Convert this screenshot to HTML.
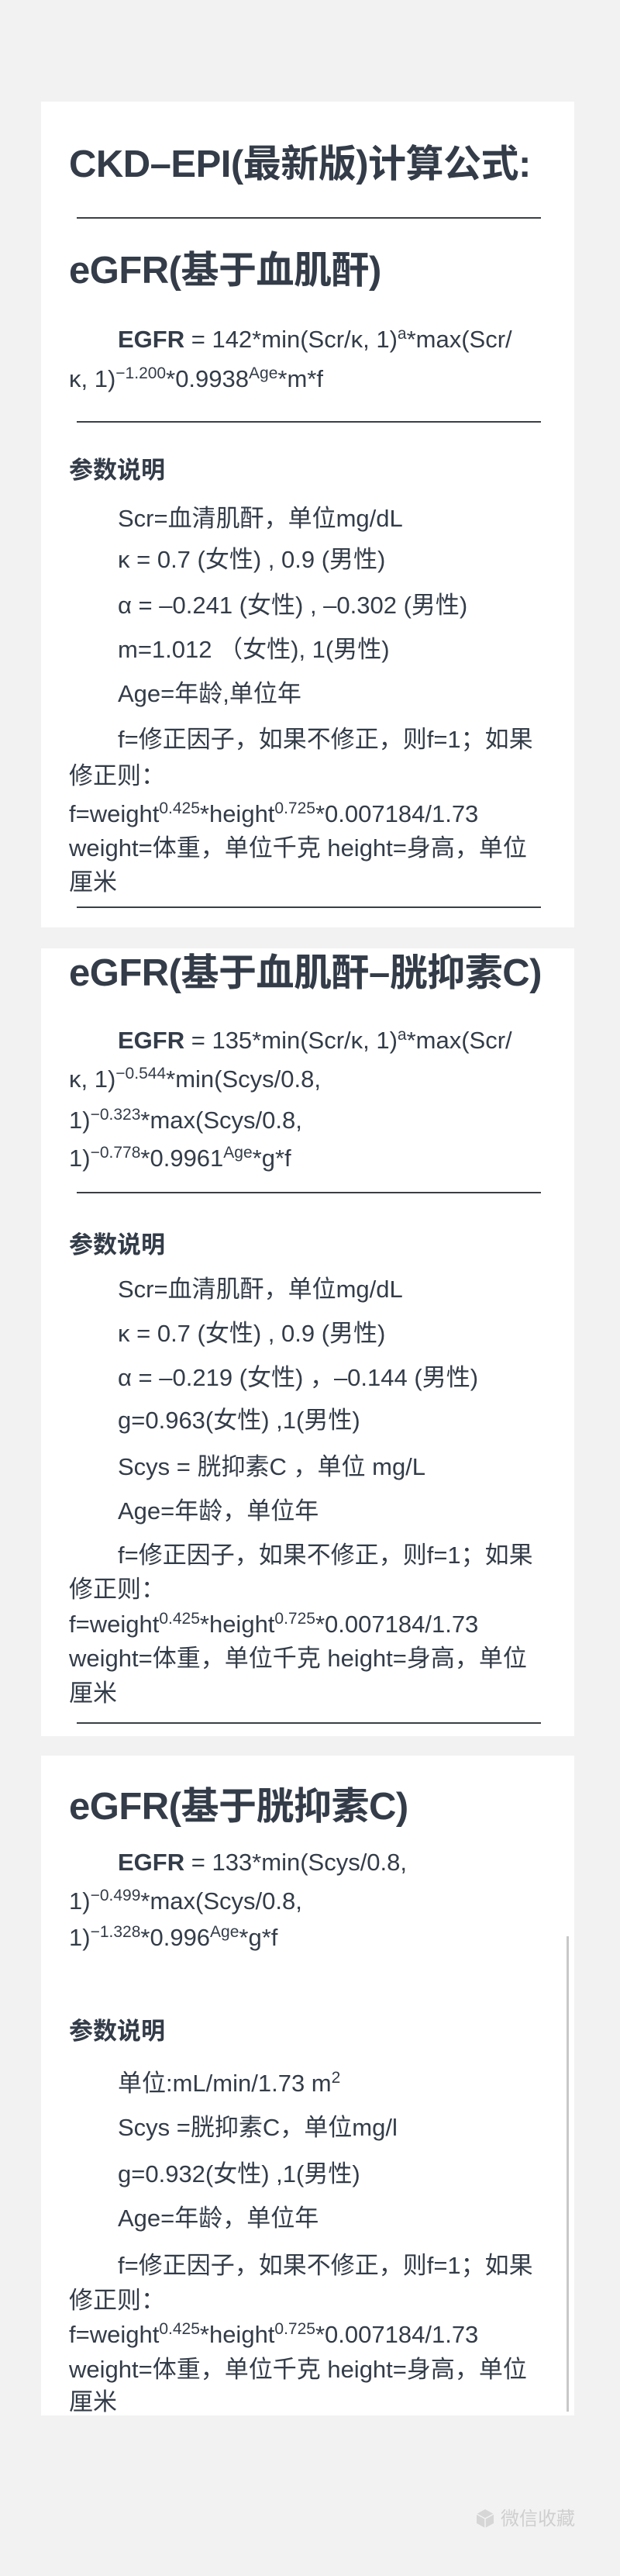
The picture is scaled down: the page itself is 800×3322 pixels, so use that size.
<!DOCTYPE html>
<html><head><meta charset="utf-8"><style>
body{margin:0;background:#f2f2f2;width:800px;height:3322px;position:relative;overflow:hidden;font-family:"Liberation Sans","Noto Sans CJK SC",sans-serif;color:#333c48}
.card{position:absolute;left:53px;width:688px;background:#fff}
.l{position:absolute;left:89px;white-space:nowrap;font-size:31px;line-height:46px;height:46px}
.i{left:152px}
.t{font-size:49px;line-height:64px;height:64px;font-weight:bold;letter-spacing:-0.5px}
.h{font-size:31px;font-weight:bold}
.hr{position:absolute;left:99px;width:599px;height:2px;background:#3a3f46}
sup{font-size:21px;vertical-align:11px;line-height:0}
b{font-weight:bold}
</style></head><body>
<div class="card" style="top:131px;height:1065px"></div>
<div class="card" style="top:1223px;height:1016px"></div>
<div class="card" style="top:2264px;height:851px"></div>
<div style="position:absolute;left:731px;top:2497px;width:3px;height:613px;background:#c8c8c8"></div>

<div class="l t" style="top:180px">CKD–EPI(最新版)计算公式:</div>
<div class="hr" style="top:280px"></div>
<div class="l t" style="top:317px">eGFR(基于血肌酐)</div>
<div class="l i" style="top:415px"><b>EGFR</b> = 142*min(Scr/κ, 1)<sup>a</sup>*max(Scr/</div>
<div class="l" style="top:466px">κ, 1)<sup>−1.200</sup>*0.9938<sup>Age</sup>*m*f</div>
<div class="hr" style="top:543px"></div>
<div class="l h" style="top:584px">参数说明</div>
<div class="l i" style="top:646px">Scr=血清肌酐，单位mg/dL</div>
<div class="l i" style="top:699px">κ = 0.7 (女性) , 0.9 (男性)</div>
<div class="l i" style="top:758px">α = –0.241 (女性) , –0.302 (男性)</div>
<div class="l i" style="top:815px">m=1.012 （女性), 1(男性)</div>
<div class="l i" style="top:872px">Age=年龄,单位年</div>
<div class="l i" style="top:931px">f=修正因子，如果不修正，则f=1；如果</div>
<div class="l" style="top:978px">修正则：</div>
<div class="l" style="top:1027px">f=weight<sup>0.425</sup>*height<sup>0.725</sup>*0.007184/1.73</div>
<div class="l" style="top:1071px">weight=体重，单位千克 height=身高，单位</div>
<div class="l" style="top:1115px">厘米</div>
<div class="hr" style="top:1169px"></div>

<div class="l t" style="top:1223px">eGFR(基于血肌酐–胱抑素C)</div>
<div class="l i" style="top:1319px"><b>EGFR</b> = 135*min(Scr/κ, 1)<sup>a</sup>*max(Scr/</div>
<div class="l" style="top:1369px">κ, 1)<sup>−0.544</sup>*min(Scys/0.8,</div>
<div class="l" style="top:1422px">1)<sup>−0.323</sup>*max(Scys/0.8,</div>
<div class="l" style="top:1471px">1)<sup>−0.778</sup>*0.9961<sup>Age</sup>*g*f</div>
<div class="hr" style="top:1537px"></div>
<div class="l h" style="top:1583px">参数说明</div>
<div class="l i" style="top:1640px">Scr=血清肌酐，单位mg/dL</div>
<div class="l i" style="top:1697px">κ = 0.7 (女性) , 0.9 (男性)</div>
<div class="l i" style="top:1754px">α = –0.219 (女性) ，–0.144 (男性)</div>
<div class="l i" style="top:1809px">g=0.963(女性) ,1(男性)</div>
<div class="l i" style="top:1869px">Scys = 胱抑素C ，单位 mg/L</div>
<div class="l i" style="top:1926px">Age=年龄，单位年</div>
<div class="l i" style="top:1983px">f=修正因子，如果不修正，则f=1；如果</div>
<div class="l" style="top:2027px">修正则：</div>
<div class="l" style="top:2072px">f=weight<sup>0.425</sup>*height<sup>0.725</sup>*0.007184/1.73</div>
<div class="l" style="top:2116px">weight=体重，单位千克 height=身高，单位</div>
<div class="l" style="top:2161px">厘米</div>
<div class="hr" style="top:2221px"></div>

<div class="l t" style="top:2298px">eGFR(基于胱抑素C)</div>
<div class="l i" style="top:2379px"><b>EGFR</b> = 133*min(Scys/0.8,</div>
<div class="l" style="top:2429px">1)<sup>−0.499</sup>*max(Scys/0.8,</div>
<div class="l" style="top:2476px">1)<sup>−1.328</sup>*0.996<sup>Age</sup>*g*f</div>
<div class="l h" style="top:2597px">参数说明</div>
<div class="l i" style="top:2664px">单位:mL/min/1.73 m<sup>2</sup></div>
<div class="l i" style="top:2721px">Scys =胱抑素C，单位mg/l</div>
<div class="l i" style="top:2781px">g=0.932(女性) ,1(男性)</div>
<div class="l i" style="top:2838px">Age=年龄，单位年</div>
<div class="l i" style="top:2899px">f=修正因子，如果不修正，则f=1；如果</div>
<div class="l" style="top:2944px">修正则：</div>
<div class="l" style="top:2988px">f=weight<sup>0.425</sup>*height<sup>0.725</sup>*0.007184/1.73</div>
<div class="l" style="top:3033px">weight=体重，单位千克 height=身高，单位</div>
<div class="l" style="top:3075px">厘米</div>

<div style="position:absolute;left:614px;top:3234px;font-size:24px;line-height:30px;color:#cfcfcf;white-space:nowrap">
<svg width="24" height="26" viewBox="0 0 24 26" style="vertical-align:-5px;margin-right:8px"><path d="M12 1L23 7V19L12 25L1 19V7Z" fill="#d6d6d6"/><path d="M1 7L12 13L23 7M12 13V25" stroke="#f2f2f2" stroke-width="1.5" fill="none"/></svg>微信收藏</div>
</body></html>
